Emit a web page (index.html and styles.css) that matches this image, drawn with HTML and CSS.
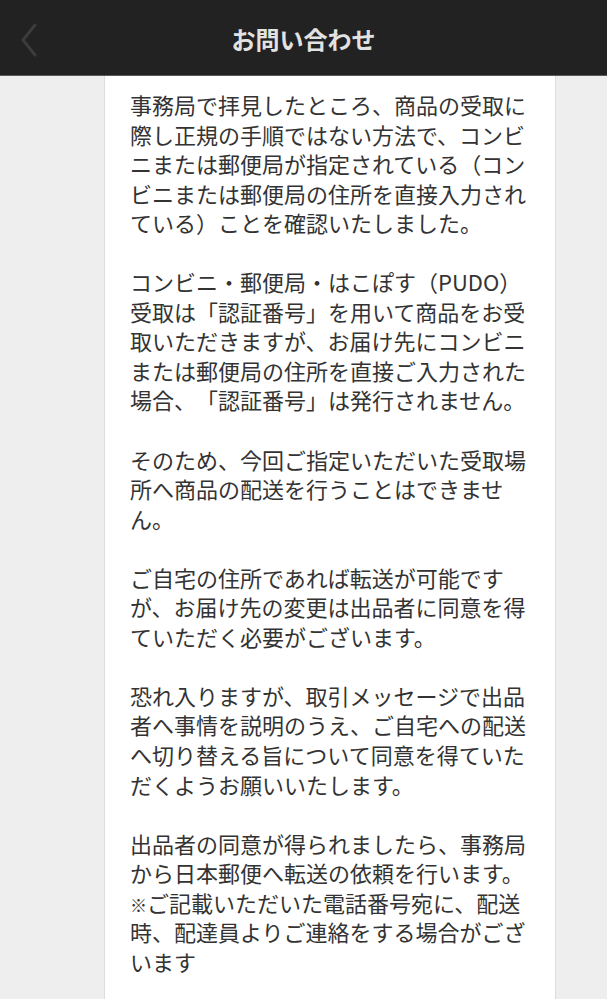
FILE: index.html
```html
<!DOCTYPE html>
<html lang="ja">
<head>
    <meta charset="UTF-8">
    <meta name="viewport" content="width=device-width, initial-scale=1.0">
    <title>お問い合わせ</title>
    <link rel="stylesheet" href="styles.css">
</head>
<body>

<header class="top-bar">
    <a class="back" href="#">
        <svg width="18" height="34" viewBox="0 0 18 34">
            <path d="M15 2 L3 17 L15 32" fill="none" stroke="#3c3c3c" stroke-width="3" stroke-linecap="round" stroke-linejoin="round"/>
        </svg>
    </a>
    <h1>お問い合わせ</h1>
</header>

<main class="message">
    <p>事務局で拝見したところ、商品の受取に際し正規の手順ではない方法で、コンビニまたは郵便局が指定されている（コンビニまたは郵便局の住所を直接入力されている）ことを確認いたしました。</p>
    <p>コンビニ・郵便局・はこぽす（PUDO）<br>受取は「認証番号」を用いて商品をお受取いただきますが、お届け先にコンビニまたは郵便局の住所を直接ご入力された場合、「認証番号」は発行されません。</p>
    <p>そのため、今回ご指定いただいた受取場所へ商品の配送を行うことはできません。</p>
    <p>ご自宅の住所であれば転送が可能ですが、お届け先の変更は出品者に同意を得ていただく必要がございます。</p>
    <p>恐れ入りますが、取引メッセージで出品者へ事情を説明のうえ、ご自宅への配送へ切り替える旨について同意を得ていただくようお願いいたします。</p>
    <p>出品者の同意が得られましたら、事務局から日本郵便へ転送の依頼を行います。<br><span class="note">※</span>ご記載いただいた電話番号宛に、配送時、配達員よりご連絡をする場合がございます</p>
</main>

</body>
</html>
```

FILE: styles.css
```css
body {
    margin: 0;
    background-color: #eeeeee;
    font-family: "Noto Sans CJK JP", "Noto Sans", sans-serif;
    color: #333333;
}
.top-bar {
    height: 75px;
    background-color: #222222;
    border-bottom: 1px solid #5a5a5a;
    display: flex;
    align-items: center;
    justify-content: center;
    position: relative;
}
.top-bar h1 {
    margin: 2px 0 0;
    font-size: 24px;
    font-weight: bold;
    color: #e2e2e2;
}
.back {
    position: absolute;
    left: 20px;
    top: 23px;
    display: block;
    line-height: 0;
}
.message {
    width: 400px;
    margin: 0 auto 0 104px;
    padding: 14px 25px 40px;
    background-color: #ffffff;
    border-left: 1px solid #dddddd;
    border-right: 1px solid #dddddd;
    min-height: 900px;
}
.message p {
    margin: 0 0 29.55px;
    font-size: 22px;
    line-height: 29.55px;
    text-spacing-trim: space-all;
}
.note {
    font-size: 17px;
    line-height: 1;
}
```
